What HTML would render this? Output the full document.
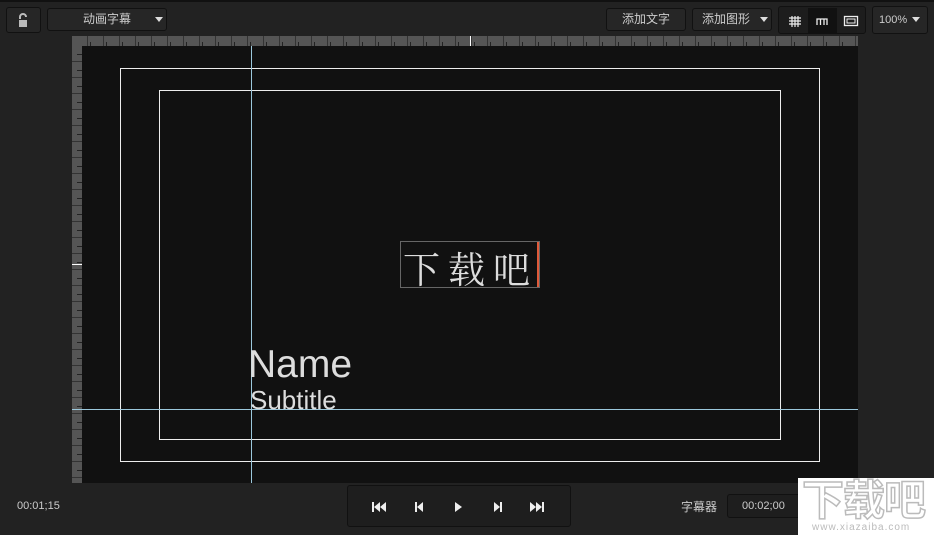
<!DOCTYPE html>
<html style="overflow:hidden;width:934px;height:535px"><head><meta charset="utf-8"><style>
body{margin:0;width:934px;height:535px;background:#222;position:relative;overflow:hidden;font-family:"Liberation Sans","Noto Sans CJK SC",sans-serif;color:#ccc}
.a{position:absolute;white-space:nowrap}
.btn{position:absolute;border:1px solid #111;border-radius:3px;background:#262626;font-size:12px;color:#ccc;text-align:center;box-sizing:border-box}
.tri{position:absolute;width:0;height:0;border-left:4px solid transparent;border-right:4px solid transparent;border-top:5px solid #ddd}
</style></head><body>
<div class="a" style="left:0;top:0;width:934px;height:2px;background:#111"></div>
<div class="btn" style="left:6px;top:7px;width:35px;height:26px;">
<svg width="35" height="26" style="position:absolute;left:0;top:0"><path d="M13 11 V9 a3 3 0 0 1 6 0" fill="none" stroke="#bbb" stroke-width="2"/><rect x="12" y="12" width="8" height="7" fill="#bbb"/></svg></div>
<div class="btn" style="left:47px;top:8px;width:120px;height:23px;line-height:21px;">动画字幕</div>
<div class="tri" style="left:155px;top:17px"></div>
<div class="btn" style="left:606px;top:8px;width:80px;height:23px;line-height:21px">添加文字</div>
<div class="btn" style="left:692px;top:8px;width:80px;height:23px;line-height:21px;text-align:left;padding-left:9px">添加图形</div>
<div class="tri" style="left:760px;top:17px"></div>
<div class="btn" style="left:778px;top:6px;width:88px;height:28px;background:#1d1d1d">
<svg width="88" height="28" style="position:absolute;left:0;top:0">
<g stroke="#eee" stroke-width="1.2" fill="none"><path d="M10 11h12M10 14h12M10 17h12M13 9v11M16 9v11M19 9v11"/></g>
<rect x="29" y="1" width="29" height="25" fill="#111"/>
<path d="M38 18v-6h10v6M41.5 12v6M45 12v6" stroke="#eee" stroke-width="1.3" fill="none"/>
<rect x="65.5" y="9.5" width="13" height="9" stroke="#eee" fill="none" stroke-width="1.3"/><rect x="68" y="12" width="8" height="4" stroke="#eee" fill="none"/>
</svg></div>
<div class="btn" style="left:872px;top:6px;width:56px;height:28px;line-height:26px;font-size:11px;text-align:left;padding-left:6px">100%</div>
<div class="tri" style="left:912px;top:17px"></div>

<div class="a" style="left:72px;top:36px;width:786px;height:447px;background:#111"></div>
<div class="a" style="left:72px;top:36px;width:786px;height:10px;background:repeating-linear-gradient(90deg,#555 0,#555 15px,#333 15px,#333 16px)"></div>
<div class="a" style="left:82px;top:42px;width:776px;height:4px;background:repeating-linear-gradient(90deg,transparent 0,transparent 8px,#222 8px,#222 9px,transparent 9px,transparent 16px)"></div>
<div class="a" style="left:72px;top:46px;width:10px;height:437px;background:repeating-linear-gradient(180deg,#555 0,#555 15px,#333 15px,#333 16px)"></div>
<div class="a" style="left:77px;top:46px;width:5px;height:437px;background:repeating-linear-gradient(180deg,transparent 0,transparent 8px,#222 8px,#222 9px,transparent 9px,transparent 16px)"></div>
<div class="a" style="left:470px;top:36px;width:1px;height:10px;background:#fff"></div>
<div class="a" style="left:72px;top:264px;width:10px;height:1px;background:#fff"></div>

<div class="a" style="left:120px;top:68px;width:698px;height:392px;border:1px solid #eee"></div>
<div class="a" style="left:159px;top:90px;width:620px;height:348px;border:1px solid #eee"></div>
<div class="a" style="left:251px;top:46px;width:1px;height:437px;background:#9cc8dc"></div>
<div class="a" style="left:72px;top:409px;width:786px;height:1px;background:#9cc8dc"></div>

<div class="a" style="left:400px;top:241px;width:138px;height:45px;border:1px solid #666"></div>
<div class="a" style="left:537px;top:242px;width:2px;height:45px;background:#e05a3a"></div>
<div class="a" style="left:403px;top:244px;font-family:'Noto Serif CJK SC',serif;font-size:37px;color:#ddd;letter-spacing:8px;line-height:46px">下载吧</div>
<div class="a" style="left:248px;top:342px;font-size:39px;color:#ddd;line-height:46px">Name</div>
<div class="a" style="left:250px;top:386px;font-size:26px;color:#ddd;line-height:28px">Subtitle</div>

<div class="a" style="left:17px;top:500px;font-size:11px;color:#ccc">00:01;15</div>
<div class="btn" style="left:347px;top:485px;width:224px;height:42px;background:#1e1e1e">
<svg width="224" height="42" style="position:absolute;left:0;top:0" fill="#eee">
<rect x="24" y="16" width="2" height="10"/><path d="M26 21l6-5v10z M32 21l6-5v10z"/>
<rect x="67" y="16" width="2" height="10"/><path d="M69 21l6-5v10z"/>
<path d="M107 16l7 5-7 5z"/>
<path d="M146 16l6 5-6 5z"/><rect x="152" y="16" width="2" height="10"/>
<path d="M182 16l6 5-6 5z M188 16l6 5-6 5z"/><rect x="194" y="16" width="2" height="10"/>
</svg></div>
<div class="a" style="left:681px;top:498px;font-size:12px;color:#ccc">字幕器</div>
<div class="btn" style="left:727px;top:494px;width:80px;height:24px;line-height:22px;font-size:11px;text-align:left;padding-left:14px;background:#1e1e1e">00:02;00</div>
<div class="a" style="left:798px;top:478px;width:136px;height:57px;background:#fff;overflow:hidden">
<div class="a" style="left:4px;top:0px;font-size:42px;line-height:46px;color:#fff;-webkit-text-stroke:1.5px #bbb;font-weight:bold;letter-spacing:-1px">下载吧</div>
<div class="a" style="left:14px;top:44px;font-size:10px;color:#bbb;letter-spacing:1px">www.xiazaiba.com</div>
</div>
</body></html>
